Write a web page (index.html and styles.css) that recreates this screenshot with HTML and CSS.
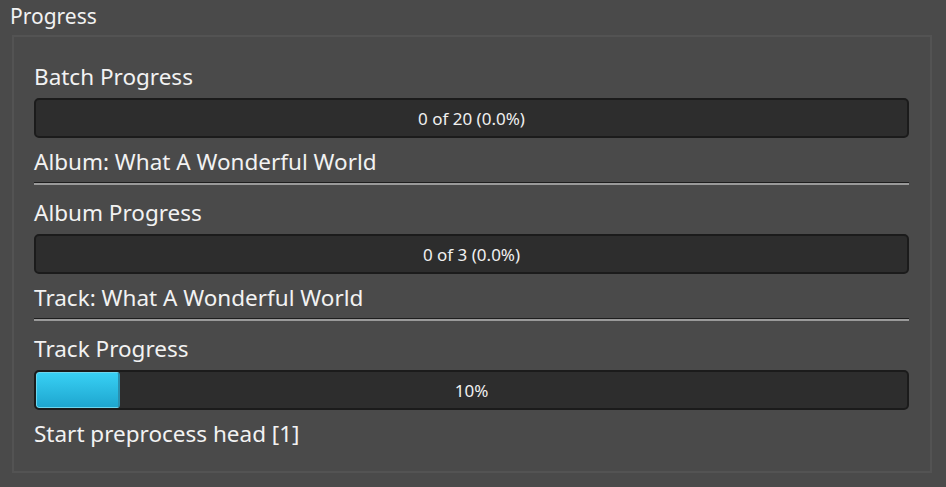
FILE: index.html
```html
<!DOCTYPE html>
<html lang="en">
<head>
    <meta charset="UTF-8">
    <title>Progress</title>
    <link rel="stylesheet" href="styles.css">
</head>
<body>
    <div class="group-title">Progress</div>
    <div class="group">
        <div class="section">
            <div class="label">Batch Progress</div>
            <div class="bar">
                <div class="bar-text">0 of 20 (0.0%)</div>
            </div>
            <div class="label status">Album: What A Wonderful World</div>
        </div>
        <div class="separator"></div>
        <div class="section">
            <div class="label">Album Progress</div>
            <div class="bar">
                <div class="bar-text">0 of 3 (0.0%)</div>
            </div>
            <div class="label status">Track: What A Wonderful World</div>
        </div>
        <div class="separator"></div>
        <div class="section">
            <div class="label">Track Progress</div>
            <div class="bar">
                <div class="bar-fill" style="width: 9.6%"></div>
                <div class="bar-text">10%</div>
            </div>
            <div class="label status">Start preprocess head [1]</div>
        </div>
    </div>
</body>
</html>
```

FILE: styles.css
```css
body {
    margin: 0;
    padding: 0 14px 14px 12px;
    background-color: #4a4a4a;
    color: #f2f2f2;
    font-family: "Noto Sans", "Open Sans", sans-serif;
}
.group-title {
    font-size: 21px;
    line-height: 28px;
    padding: 2px 0 0 0;
    margin-left: -2px;
    height: 33px;
}
.group {
    border: 2px solid #535353;
    padding: 26px 21px 23px 20px;
}
.label {
    font-size: 22.5px;
    line-height: 28px;
}
.section .label:first-child {
    margin-bottom: 7px;
}
.status {
    margin-top: 10px;
}
.bar {
    position: relative;
    height: 36px;
    background: #2d2d2d;
    border: 2px solid #1b1b1b;
    border-radius: 5px;
    overflow: hidden;
}
.bar-fill {
    height: 100%;
    box-sizing: border-box;
    background: linear-gradient(#38d0f4, #1ea6cf);
    border: 1px solid #6cd6ee;
    border-right: 2px solid #2a8fae;
    border-radius: 3px;
}
.bar-text {
    position: absolute;
    top: 0;
    left: 0;
    right: 0;
    bottom: 0;
    display: flex;
    align-items: center;
    justify-content: center;
    font-size: 17px;
    color: #f0f0f0;
}
.separator {
    margin: 6px 0 14px;
    border-top: 1px solid #1e1e1e;
    height: 2px;
    background: #9a9a9a;
}
```
